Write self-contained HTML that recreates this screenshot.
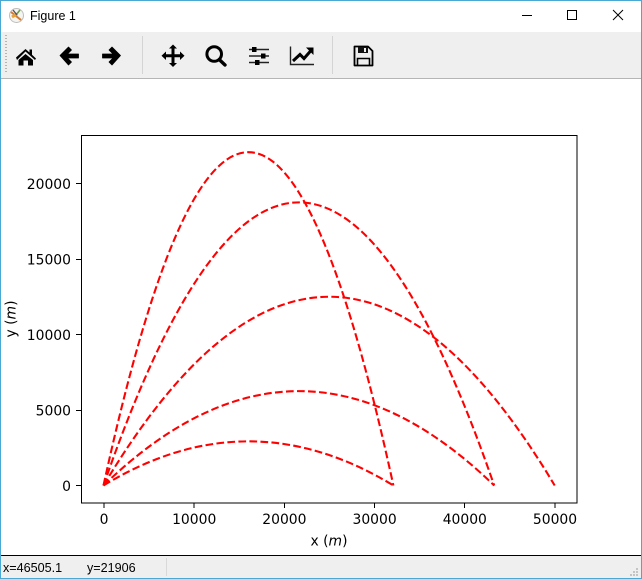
<!DOCTYPE html>
<html><head><meta charset="utf-8"><style>
html,body{margin:0;padding:0;background:#fff}
#w{position:relative;width:642px;height:579px;overflow:hidden;background:#fff}
svg{position:absolute;left:0;top:0}
</style></head><body><div id="w">
<svg width="642" height="579" viewBox="0 0 642 579" xmlns="http://www.w3.org/2000/svg">
<rect x="0" y="32" width="642" height="46" fill="#efefef"/>
<rect x="0" y="78" width="642" height="1" fill="#b5b5b5"/>
<rect x="0" y="556" width="642" height="23" fill="#efefef"/>
<rect x="0" y="555" width="642" height="1" fill="#000"/>
<rect x="166" y="558" width="1" height="18" fill="#d9d9d9"/>
<!-- title icon -->
<circle cx="16.5" cy="15.5" r="7" fill="#f4f4f2" stroke="#bdbdbd" stroke-width="1"/>
<path d="M11 12L21 20" stroke="#d97a2c" stroke-width="2"/>
<path d="M12 17L17 14" stroke="#e9a13a" stroke-width="3"/>
<path d="M16 15L20 10" stroke="#6f9f4a" stroke-width="1.6"/>
<path d="M13 10L17 15" stroke="#555" stroke-width="1.4"/>
<text x="30" y="20" font-family="'Liberation Sans',sans-serif" font-size="12.5" fill="#000">Figure 1</text>
<!-- window controls -->
<rect x="522" y="15" width="10" height="1" fill="#000"/>
<rect x="567.5" y="10.5" width="9" height="9" fill="none" stroke="#000"/>
<path d="M613 10L623 20M623 10L613 20" stroke="#000" stroke-width="1"/>
<!-- grip -->
<path d="M6 35V73" stroke="#b4b4b4" stroke-width="2" stroke-dasharray="1 2"/>
<!-- separators -->
<rect x="142" y="36" width="1" height="38" fill="#d4d4d4"/>
<rect x="332" y="36" width="1" height="38" fill="#d4d4d4"/>
<!-- home -->
<path d="M16 57.5L25.5 49L29.5 52.5V49.5H32V54.8L36 58.5L35 60L25.5 51.5L17 60Z" fill="#000"/>
<path d="M18.5 60L25.5 54L33 60V65.5H28V60.5H23.5V65.5H18.5Z" fill="#000"/>
<!-- back -->
<path d="M60 55.5L68.5 47L71.5 50L67.5 54H78.5V58H67.5L71.5 62L68.5 65Z" fill="#000" stroke="#000" stroke-linejoin="round" stroke-width="0.8"/>
<!-- forward -->
<path d="M120.5 55.5L112 47L109 50L113 54H102.5V58H113L109 62L112 65Z" fill="#000" stroke="#000" stroke-linejoin="round" stroke-width="0.8"/>
<!-- move -->
<path d="M173 44.5L177 48.5H174.5V54.2H180V51.5L184.5 55.7L180 60V57.2H174.5V63H177L173 67L169 63H171.5V57.2H166V60L161.5 55.7L166 51.5V54.2H171.5V48.5H169Z" fill="#000"/>
<!-- zoom -->
<circle cx="214.2" cy="54" r="7.3" fill="none" stroke="#000" stroke-width="3"/>
<path d="M219.2 59.5L225 65" stroke="#000" stroke-width="3.4" stroke-linecap="round"/>
<!-- sliders -->
<path d="M249 49.5H269M249 56H269M249 62.5H269" stroke="#222" stroke-width="1.6"/>
<rect x="252" y="47" width="4.5" height="5" fill="#000"/>
<rect x="261" y="53.5" width="4.5" height="5" fill="#000"/>
<rect x="255" y="60" width="4.5" height="5" fill="#000"/>
<!-- chart -->
<path d="M290.5 46.5V64.5H314" fill="none" stroke="#222" stroke-width="1.4"/>
<path d="M293 61L300 54.5L304 58.5L311 50.5" fill="none" stroke="#000" stroke-width="3"/>
<path d="M306 47.5H313.5V55Z" fill="#000"/>
<!-- save -->
<path d="M354.5 46.5H368L372.5 51V65.5H354.5Z" fill="none" stroke="#000" stroke-width="1.8" stroke-linejoin="round"/>
<rect x="358" y="47" width="10" height="6" fill="#111"/>
<rect x="364" y="48" width="2" height="4" fill="#efefef"/>
<path d="M357.5 65V58.5H369.5V65" fill="none" stroke="#000" stroke-width="1.6"/>
<!-- axes -->
<rect x="81.5" y="135.5" width="495.5" height="367.5" fill="#fff" stroke="#000" stroke-width="1"/>
<g fill="none" stroke="#ff0000" stroke-width="2.08" stroke-dasharray="7.7 3.33">
<path d="M103.5 485.5Q248.5 -181.2 393.4 485.5"/>
<path d="M103.5 485.5Q299 -80.75 494.2 485.5"/>
<path d="M103.5 485.5Q329.2 108 554.7 485.5"/>
<path d="M103.5 485.5Q299 296.75 494.2 485.5"/>
<path d="M103.5 485.5Q248.5 397.2 393.4 485.5"/>
</g>
<!-- ticks -->
<g stroke="#000" stroke-width="1">
<path d="M104 503V508M194 503V508M284.5 503V508M374.5 503V508M464.5 503V508M555 503V508"/>
<path d="M81 485.5H76M81 410.5H76M81 334.5H76M81 259.5H76M81 183.5H76"/>
</g>
<g font-family="'DejaVu Sans',sans-serif" font-size="13.9" fill="#000">
<g text-anchor="middle">
<text x="104" y="524">0</text>
<text x="194.2" y="524">10000</text>
<text x="284.4" y="524">20000</text>
<text x="374.6" y="524">30000</text>
<text x="464.8" y="524">40000</text>
<text x="555" y="524">50000</text>
</g>
<g text-anchor="end">
<text x="71" y="491">0</text>
<text x="71" y="415.5">5000</text>
<text x="71" y="340">10000</text>
<text x="71" y="264.5">15000</text>
<text x="71" y="189">20000</text>
</g>
<text x="329" y="545.5" text-anchor="middle">x (<tspan font-style="italic">m</tspan>)</text>
<text transform="translate(15.5 319) rotate(-90)" text-anchor="middle">y (<tspan font-style="italic">m</tspan>)</text>
</g>
<!-- status -->
<g font-family="'Liberation Sans',sans-serif" font-size="12.6" fill="#000">
<text x="3" y="572">x=46505.1</text>
<text x="87" y="572">y=21906</text>
</g>
<g fill="#c4c4c4">
<rect x="636" y="568" width="2" height="2"/>
<rect x="633" y="571" width="2" height="2"/><rect x="636" y="571" width="2" height="2"/>
<rect x="630" y="574" width="2" height="2"/><rect x="633" y="574" width="2" height="2"/><rect x="636" y="574" width="2" height="2"/>
</g>
<!-- window border -->
<rect x="0.5" y="0.5" width="641" height="578" fill="none" stroke="#4aa9d3" stroke-width="1"/>
</svg>
</div></body></html>
